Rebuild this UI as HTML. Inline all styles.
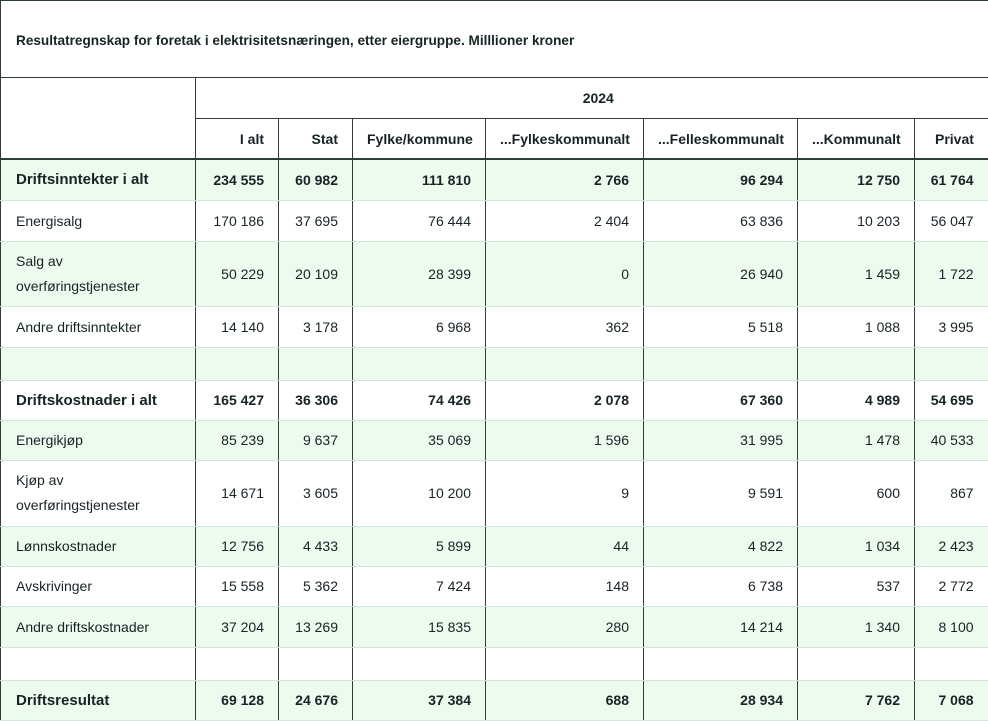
<!DOCTYPE html>
<html><head><meta charset="utf-8"><style>
html,body{margin:0;padding:0;background:#fff;width:988px;height:720px;overflow:hidden}
body{font-family:"Liberation Sans",Arial,sans-serif;color:#162327}
.title{position:absolute;left:0;top:0;width:1000px;height:77px;border:1px solid #2f3d3f;border-bottom:none;box-sizing:border-box}
.title div{position:absolute;left:15px;top:32px;font-size:13.6px;font-weight:bold}
table{position:absolute;left:0;top:77px;border-collapse:collapse;table-layout:fixed;width:1000px;font-size:14px}
td,th{padding:0 14px;text-align:right;border-left:1px solid #2f3d3f;border-bottom:1px solid #d3e6dc;white-space:nowrap}
th{font-weight:bold;font-size:14px}
td:first-child,th:first-child{text-align:left;padding-left:15px;border-left:1px solid #2f3d3f}
td:last-child{padding-right:27px}
tr.g td{background:#ebfbee}
tr.b td{font-weight:bold}
tr.b td:first-child{font-size:15px}
.h1 th{border-top:1px solid #2f3d3f;height:40px;border-bottom:1px solid #2f3d3f;text-align:center}
.h2 th{height:39px;border-bottom:2px solid #2f3d3f}
td.w{white-space:normal;line-height:25px}
</style></head><body>
<div class="title"><div>Resultatregnskap for foretak i elektrisitetsnæringen, etter eiergruppe. Milllioner kroner</div></div>
<table>
<colgroup><col style="width:195px"><col style="width:83px"><col style="width:74px"><col style="width:133px"><col style="width:158px"><col style="width:154px"><col style="width:117px"><col style="width:86px"></colgroup>
<tr class="h1"><th rowspan="2" style="border-bottom:2px solid #2f3d3f"></th><th colspan="7">2024</th></tr>
<tr class="h2"><th style="text-align:right">I alt</th><th style="text-align:right">Stat</th><th style="text-align:right">Fylke/kommune</th><th style="text-align:right">...Fylkeskommunalt</th><th style="text-align:right">...Felleskommunalt</th><th style="text-align:right">...Kommunalt</th><th style="text-align:left;padding-left:20px">Privat</th></tr>
<tr class="g b" style="height:41px"><td>Driftsinntekter i alt</td><td>234 555</td><td>60 982</td><td>111 810</td><td>2 766</td><td>96 294</td><td>12 750</td><td>61 764</td></tr>
<tr style="height:41px"><td>Energisalg</td><td>170 186</td><td>37 695</td><td>76 444</td><td>2 404</td><td>63 836</td><td>10 203</td><td>56 047</td></tr>
<tr class="g" style="height:65px"><td class="w">Salg av<br>overføringstjenester</td><td>50 229</td><td>20 109</td><td>28 399</td><td>0</td><td>26 940</td><td>1 459</td><td>1 722</td></tr>
<tr style="height:41px"><td>Andre driftsinntekter</td><td>14 140</td><td>3 178</td><td>6 968</td><td>362</td><td>5 518</td><td>1 088</td><td>3 995</td></tr>
<tr class="g" style="height:33px"><td></td><td></td><td></td><td></td><td></td><td></td><td></td><td></td></tr>
<tr class="b" style="height:40px"><td>Driftskostnader i alt</td><td>165 427</td><td>36 306</td><td>74 426</td><td>2 078</td><td>67 360</td><td>4 989</td><td>54 695</td></tr>
<tr class="g" style="height:40px"><td>Energikjøp</td><td>85 239</td><td>9 637</td><td>35 069</td><td>1 596</td><td>31 995</td><td>1 478</td><td>40 533</td></tr>
<tr style="height:66px"><td class="w">Kjøp av<br>overføringstjenester</td><td>14 671</td><td>3 605</td><td>10 200</td><td>9</td><td>9 591</td><td>600</td><td>867</td></tr>
<tr class="g" style="height:40px"><td>Lønnskostnader</td><td>12 756</td><td>4 433</td><td>5 899</td><td>44</td><td>4 822</td><td>1 034</td><td>2 423</td></tr>
<tr style="height:40px"><td>Avskrivinger</td><td>15 558</td><td>5 362</td><td>7 424</td><td>148</td><td>6 738</td><td>537</td><td>2 772</td></tr>
<tr class="g" style="height:41px"><td>Andre driftskostnader</td><td>37 204</td><td>13 269</td><td>15 835</td><td>280</td><td>14 214</td><td>1 340</td><td>8 100</td></tr>
<tr style="height:33px"><td></td><td></td><td></td><td></td><td></td><td></td><td></td><td></td></tr>
<tr class="g b" style="height:40px"><td>Driftsresultat</td><td>69 128</td><td>24 676</td><td>37 384</td><td>688</td><td>28 934</td><td>7 762</td><td>7 068</td></tr>
</table>
</body></html>
